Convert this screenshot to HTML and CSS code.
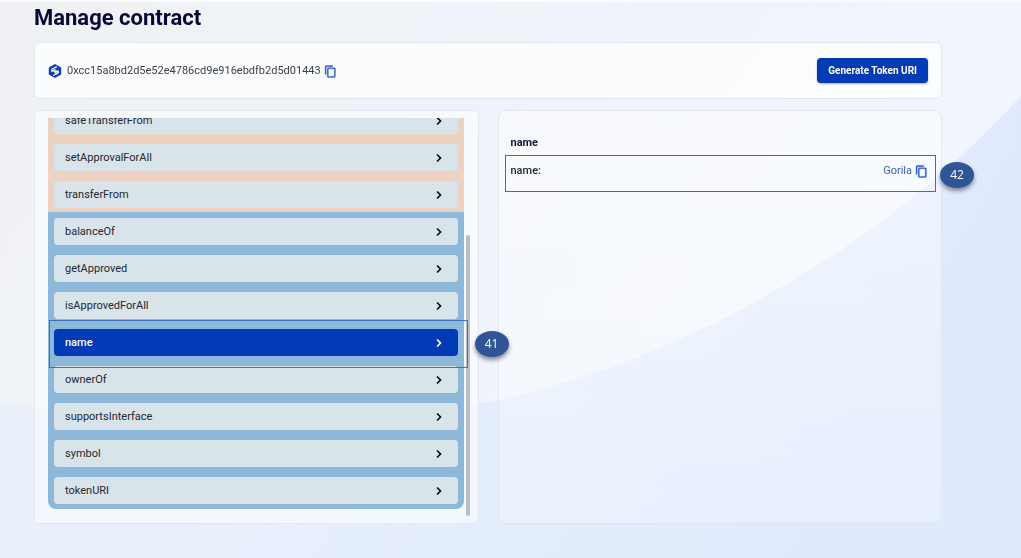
FILE: index.html
```html
<!DOCTYPE html>
<html lang="en">
<head>
<meta charset="utf-8">
<meta name="viewport" content="width=device-width, initial-scale=1">
<title>Manage contract</title>
<link rel="stylesheet" href="styles.css">
</head>
<body>
<svg class="backdrop" viewBox="0 0 1021 558" preserveAspectRatio="none" aria-hidden="true">
  <defs>
    <linearGradient id="base" x1="0" y1="0" x2="1" y2="0.3">
      <stop offset="0" stop-color="#ebf1fa"/>
      <stop offset="0.5" stop-color="#e7effc"/>
      <stop offset="1" stop-color="#dfeafc"/>
    </linearGradient>
    <linearGradient id="disc" x1="0" y1="0" x2="1" y2="0.3">
      <stop offset="0" stop-color="#eff1f4"/>
      <stop offset="0.5" stop-color="#eff3f9"/>
      <stop offset="1" stop-color="#f1f6ff"/>
    </linearGradient>
    <symbol id="copy" viewBox="0 0 24 24">
      <path fill="currentColor" stroke="currentColor" stroke-width="0.6" d="M16 1H4a2 2 0 0 0-2 2v14h2V3h12zm3 4H8a2 2 0 0 0-2 2v14a2 2 0 0 0 2 2h11a2 2 0 0 0 2-2V7a2 2 0 0 0-2-2m0 16H8V7h11z"/>
    </symbol>
    <symbol id="chevron" viewBox="0 0 12 12">
      <path fill="none" stroke="currentColor" stroke-width="1.700" d="M4 2.500l3.500 3.500L4 9.500"/>
    </symbol>
  </defs>
  <rect width="1021" height="558" fill="url(#base)"/>
  <path fill="url(#disc)" d="M0 0H1021V96C900 230 700 360 478 404C330 425 160 425 0 402Z"/>
</svg>
<main class="page">
  <h1 class="title">Manage contract</h1>
  <section class="card address-bar">
    <div class="address">
      <svg class="logo" viewBox="0 0 14 14" aria-hidden="true">
        <path fill="#0a3fb8" d="M7 0l6.200 3.500v7L7 14 .8 10.500v-7z"/>
        <path fill="none" stroke="#fff" stroke-width="1.300" d="M8.800 2.600L3.800 5.300V7L10.200 7.200V8.800L5.200 11.500M3.800 7L7.500 5.500M10.200 7.200L6.500 8.800"/>
      </svg>
      <span>0xcc15a8bd2d5e52e4786cd9e916ebdfb2d5d01443</span>
      <button class="copy" type="button" aria-label="Copy address"><svg><use href="#copy"/></svg></button>
    </div>
    <button class="primary" type="button">Generate Token URI</button>
  </section>
  <div class="columns">
    <section class="card methods">
      <div class="scroller">
        <ul class="group write">
          <li><button class="method" type="button">safeTransferFrom<svg><use href="#chevron"/></svg></button></li>
          <li><button class="method" type="button">setApprovalForAll<svg><use href="#chevron"/></svg></button></li>
          <li><button class="method" type="button">transferFrom<svg><use href="#chevron"/></svg></button></li>
        </ul>
        <ul class="group read">
          <li><button class="method" type="button">balanceOf<svg><use href="#chevron"/></svg></button></li>
          <li><button class="method" type="button">getApproved<svg><use href="#chevron"/></svg></button></li>
          <li><button class="method" type="button">isApprovedForAll<svg><use href="#chevron"/></svg></button></li>
          <li class="marked"><button class="method active" type="button">name<svg><use href="#chevron"/></svg></button><span class="outline"></span><span class="badge">41</span></li>
          <li><button class="method" type="button">ownerOf<svg><use href="#chevron"/></svg></button></li>
          <li><button class="method" type="button">supportsInterface<svg><use href="#chevron"/></svg></button></li>
          <li><button class="method" type="button">symbol<svg><use href="#chevron"/></svg></button></li>
          <li><button class="method" type="button">tokenURI<svg><use href="#chevron"/></svg></button></li>
        </ul>
      </div>
      <span class="thumb"></span>
    </section>
    <section class="card detail">
      <h2 class="detail-title">name</h2>
      <div class="result">
        <span class="result-label">name:</span>
        <span class="result-value">Gorila <button class="copy" type="button" aria-label="Copy name"><svg><use href="#copy"/></svg></button></span>
        <span class="badge">42</span>
      </div>
    </section>
  </div>
</main>
</body>
</html>
```
FILE: styles.css
```css
* {
  box-sizing: border-box;
}

body {
  margin: 0;
  min-height: 100vh;
  font: 11px/16px Roboto, "Liberation Sans", sans-serif;
  color: #24282e;
  border-top: 2px solid #fafbfd;
}

button {
  font: inherit;
  border: 0;
  cursor: pointer;
}

.backdrop {
  position: fixed;
  inset: 0;
  z-index: -1;
  width: 100%;
  height: 100%;
}

.page {
  padding: 0 79px 34px 34px;
}

.title {
  margin: 0;
  padding: 2px 0 10px;
  font-size: 22px;
  line-height: 28px;
  font-weight: 700;
  color: #0b0838;
}

.card {
  border: 1px solid #e2e7ef;
  border-radius: 6px;
}

.address-bar {
  display: flex;
  align-items: center;
  justify-content: space-between;
  height: 57px;
  padding: 0 13px;
  background: rgba(255, 255, 255, 0.75);
}

.address {
  display: flex;
  align-items: center;
  padding-top: 1px;
  color: #3a3d42;
}

.logo {
  width: 14px;
  height: 14px;
  margin-right: 5px;
}

.copy {
  display: inline-flex;
  padding: 0;
  margin-left: 3px;
  background: none;
  color: #2454c4;
}

.copy svg {
  width: 13px;
  height: 13px;
}

.primary {
  height: 25px;
  padding: 0 11px;
  border-radius: 4px;
  background: #003ab5;
  color: #fff;
  font-size: 10px;
  font-weight: 700;
  box-shadow: 0 1px 2px rgba(0, 20, 80, 0.35);
}

.columns {
  display: grid;
  grid-template-columns: 1fr 1fr;
  gap: 19px;
  margin-top: 11px;
  min-height: 414px;
}

.methods {
  position: relative;
  padding: 7px 14px 14px 13px;
  background: rgba(255, 255, 255, 0.55);
}

.scroller {
  position: relative;
  z-index: 1;
  display: flex;
  flex-direction: column;
  justify-content: flex-end;
  height: 391px;
  overflow-x: visible;
  overflow-y: clip;
}

.group {
  display: flex;
  flex: none;
  flex-direction: column;
  gap: 10px;
  margin: 0;
  padding: 6px;
  list-style: none;
}

.write {
  padding-bottom: 4px;
  border-radius: 8px 8px 0 0;
  background: #ecd2c2;
}

.read {
  padding-bottom: 5px;
  border-radius: 0 0 8px 8px;
  background: #8db8da;
}

.method {
  display: flex;
  align-items: center;
  justify-content: space-between;
  width: 100%;
  height: 27px;
  padding: 1px 13px 0 11px;
  border-radius: 4px;
  background: #d9e3ea;
  color: #24282e;
  text-align: left;
}

.method svg {
  width: 12px;
  height: 12px;
  color: #0b0d14;
}

.method.active {
  background: #003ab5;
  color: #fff;
  font-weight: 500;
}

.method.active svg {
  color: #fff;
}

.marked {
  position: relative;
}

.outline {
  position: absolute;
  inset: -9px -10px -12px -5px;
  border: 1px solid #3d72bb;
  pointer-events: none;
}

.badge {
  position: absolute;
  display: flex;
  align-items: center;
  justify-content: center;
  width: 34px;
  height: 26px;
  border-radius: 50%;
  background: #2f5597;
  color: #fff;
  font: 12px/16px "Open Sans", sans-serif;
  box-shadow: 0 3px 4px rgba(30, 35, 50, 0.5);
}

.marked .badge {
  top: 2px;
  right: -51px;
}

.thumb {
  position: absolute;
  right: 8px;
  bottom: 7px;
  width: 4px;
  height: 281px;
  border-radius: 2px;
  background: #b9bfc9;
}

.detail {
  padding: 24px 5px 16px 6px;
  background: linear-gradient(rgba(255, 255, 255, 0.5), rgba(255, 255, 255, 0.25));
  border-radius: 8px;
}

.detail-title {
  margin: 0 0 4px 6px;
  font-size: 11px;
  line-height: 16px;
  font-weight: 700;
  color: #14113e;
}

.result {
  position: relative;
  display: flex;
  justify-content: space-between;
  min-height: 37px;
  padding: 7px 7px 0 5px;
  border: 1px solid #3f6ea8;
}

.result-label {
  font-weight: 500;
}

.result-value {
  display: flex;
  align-items: center;
  height: 16px;
  color: #3d62c2;
}

.result .badge {
  top: 6px;
  right: -39px;
}
```
